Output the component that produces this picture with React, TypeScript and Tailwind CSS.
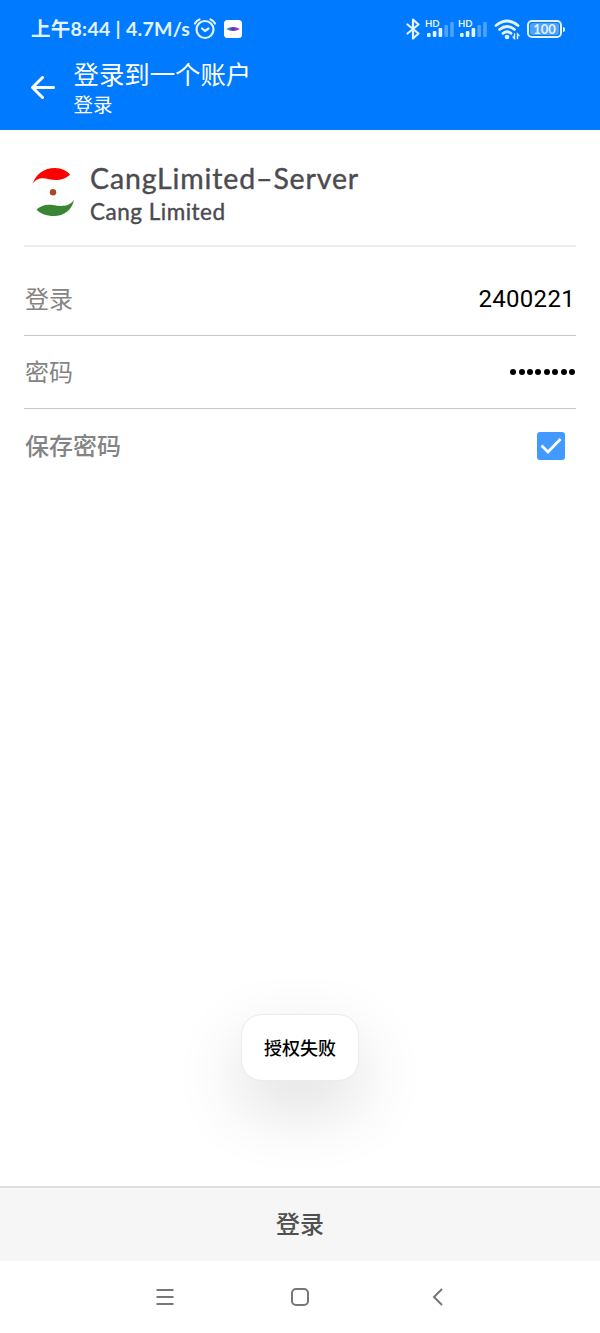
const signalBars = [
  { x: 0, y: 11, height: 4, lit: true },
  { x: 5.8, y: 9, height: 6, lit: true },
  { x: 11.6, y: 6, height: 9, lit: true },
  { x: 17.4, y: 3, height: 12, lit: false },
  { x: 23.2, y: 0, height: 15, lit: false }
];

function SignalIcon() {
  return (
    <div className="relative w-[27px] h-[20px]">
      <span className="absolute left-[-2px] top-0 text-[9.5px] leading-[9px] font-bold">HD</span>
      <svg className="absolute left-0 top-[3px]" width="27" height="16" viewBox="0 0 27 16" fill="currentColor">
        {signalBars.map((bar) => (
          <rect key={bar.x} x={bar.x} y={bar.y} width="3.6" height={bar.height} rx="1" opacity={bar.lit ? 1 : 0.35} />
        ))}
      </svg>
    </div>
  );
}

function StatusBar() {
  return (
    <div className="h-[58px] pl-[31px] pr-[35px] flex items-center justify-between text-[#e3f2ff]">
      <div className="flex items-center">
        <span className="w-[159px] text-[19.5px] leading-6 font-bold tracking-[0.27px] whitespace-nowrap">上午8:44 | 4.7M/s</span>
        <svg className="ml-[3px]" width="24" height="24" viewBox="0 0 24 24" fill="none" stroke="currentColor" strokeWidth="2.2" strokeLinecap="round" strokeLinejoin="round">
          <circle cx="12" cy="12.5" r="8.5" />
          <path d="M9 11.5l3 2.5 3.5-2.5M2 6.5Q3.5 3.5 6.5 2.5M22 6.5Q20.5 3.5 17.5 2.5" />
        </svg>
        <svg className="ml-[7px]" width="18" height="18" viewBox="0 0 18 18">
          <defs>
            <linearGradient id="lens">
              <stop offset="0" stopColor="#22b8dc" />
              <stop offset="0.5" stopColor="#5a35a8" />
              <stop offset="1" stopColor="#b13bea" />
            </linearGradient>
          </defs>
          <rect width="18" height="18" rx="3.5" fill="white" />
          <path d="M2 9Q9 5 16 9Q9 13 2 9z" fill="url(#lens)" />
        </svg>
      </div>
      <div className="flex items-center">
        <svg width="14" height="22" viewBox="0 0 14 22" fill="none" stroke="currentColor" strokeWidth="2.2" strokeLinecap="round" strokeLinejoin="round">
          <path d="M1.5 6.5l11 9L7 20.5V1.5l5.5 5-11 9" />
        </svg>
        <div className="ml-[7px]"><SignalIcon /></div>
        <div className="ml-[6px]"><SignalIcon /></div>
        <svg className="ml-[7px]" width="27" height="21" viewBox="0 0 27 21" fill="none" stroke="currentColor" strokeWidth="2.8" strokeLinecap="round">
          <path d="M2 6.5Q13 -2.5 24 6.5M5.5 10.5Q13 4.5 20.5 10.5M9 14.3Q13 11.3 17 14.3" />
          <circle cx="13" cy="18" r="2.3" fill="currentColor" stroke="none" />
          <path d="M20.5 15v4.5l-1.500-1.500M23.500 19.500V15l1.500 1.500" strokeWidth="1.4" />
        </svg>
        <div className="ml-[6px] w-[35px] h-[18px] rounded-[5px] border-2 border-current p-[1px]">
          <div className="h-full rounded-[3px] bg-[#4da2ff] flex items-center justify-center text-[13px] leading-none font-bold">100</div>
        </div>
        <span className="ml-[1px] w-[2px] h-[5px] rounded-r bg-current" />
      </div>
    </div>
  );
}

function Header() {
  return (
    <header className="h-[130px] bg-[#007aff] text-white">
      <StatusBar />
      <div className="flex pl-[30px]">
        <svg className="mt-[18px]" width="25" height="23" viewBox="0 0 25 23" fill="none" stroke="currentColor" strokeWidth="3" strokeLinecap="round" strokeLinejoin="round">
          <path d="M12.500 1.500L2.500 11.500l10 10M3 11.500H23.500" />
        </svg>
        <div className="ml-[18.5px]">
          <h1 className="text-[25.4px] leading-[33px] font-normal">登录到一个账户</h1>
          <p className="text-[19.5px] leading-[28px]">登录</p>
        </div>
      </div>
    </header>
  );
}

function ServerLogo() {
  return (
    <svg width="44" height="53" viewBox="0 0 44 53">
      <path d="M1.500 20C5 10 13 4 24 4C31 4 36 7 39 10.500C35 14.500 30 16 25 16C17 16 8 10 1.500 20z" fill="#fd0000" />
      <circle cx="22" cy="28.300" r="3.200" fill="#a84a2a" />
      <path d="M5.500 45.500C10 41 16 40 22 41C30 42.500 38 43 43 36C41 46 33 52 23 52C15 52 9 49.500 5.500 45.500z" fill="#3a8533" />
    </svg>
  );
}

function Row({ label, children }: { label: string; children: React.ReactNode }) {
  return (
    <div className="h-[73px] flex items-center justify-between border-b border-[#c9c9c9]">
      <span className="pl-px text-2xl text-[#848484]">{label}</span>
      {children}
    </div>
  );
}

export default function App() {
  return (
    <div className="relative w-[600px] h-[1333px] flex flex-col overflow-hidden bg-white font-[Lato,'Noto_Sans_CJK_SC',sans-serif]">
      <Header />

      <main className="flex-1 px-6">
        <div className="h-[117px] flex items-start border-b-2 border-[#ececec]">
          <div className="mt-[34px] ml-[7px]"><ServerLogo /></div>
          <div className="ml-[15px] mt-[30px] text-[#4b4b50] [-webkit-text-stroke:0.4px_#4b4b50]">
            <h2 className="text-[28.5px] leading-9 tracking-[0.86px]">CangLimited–Server</h2>
            <p className="text-[22.5px] leading-8 tracking-[0.5px]">Cang Limited</p>
          </div>
        </div>

        <div className="pt-4">
          <Row label="登录">
            <span className="mr-px font-[Roboto,sans-serif] text-2xl tracking-[0.3px] text-black">2400221</span>
          </Row>
          <Row label="密码">
            <div className="mr-px flex gap-[2.400px]">
              {Array.from({ length: 8 }, (_, i) => (
                <span key={i} className="w-[6px] h-[6px] rounded-full bg-black" />
              ))}
            </div>
          </Row>
          <div className="h-[74px] flex items-center justify-between">
            <span className="pl-px text-2xl font-medium text-[#848484]">保存密码</span>
            <span className="mr-[11px] w-7 h-7 rounded-[3px] bg-[#4299ff]">
              <svg width="28" height="28" viewBox="0 0 28 28" fill="none" stroke="white" strokeWidth="2.8">
                <path d="M4.500 13.500l6.500 6.500L23.500 7" />
              </svg>
            </span>
          </div>
        </div>
      </main>

      {/* toast */}
      <div className="absolute left-[241px] top-[1014px] w-[118px] h-[67px] rounded-[21px] border border-[#ebebeb] bg-white flex items-center justify-center text-lg font-medium text-black shadow-[0_26px_70px_rgba(0,0,0,0.14)]">
        授权失败
      </div>

      <button className="h-[75px] shrink-0 border-t-2 border-[#dedede] bg-[#f6f6f6] pb-px text-2xl font-medium text-[#505050]">
        登录
      </button>
      <nav className="h-[72px] shrink-0 pb-px pl-[156px] pr-[157px] flex items-center text-[#777777]">
        <svg width="18" height="18" viewBox="0 0 18 18" fill="none" stroke="currentColor" strokeWidth="2">
          <path d="M0.500 2h17M0.500 9h17M0.500 16h17" />
        </svg>
        <svg className="ml-[117px]" width="18" height="18" viewBox="0 0 18 18" fill="none" stroke="currentColor" strokeWidth="2">
          <rect x="1" y="1" width="16" height="16" rx="4" />
        </svg>
        <svg className="ml-auto" width="11" height="18" viewBox="0 0 11 18" fill="none" stroke="currentColor" strokeWidth="2">
          <path d="M10 1L2 9l8 8" />
        </svg>
      </nav>
    </div>
  );
}
